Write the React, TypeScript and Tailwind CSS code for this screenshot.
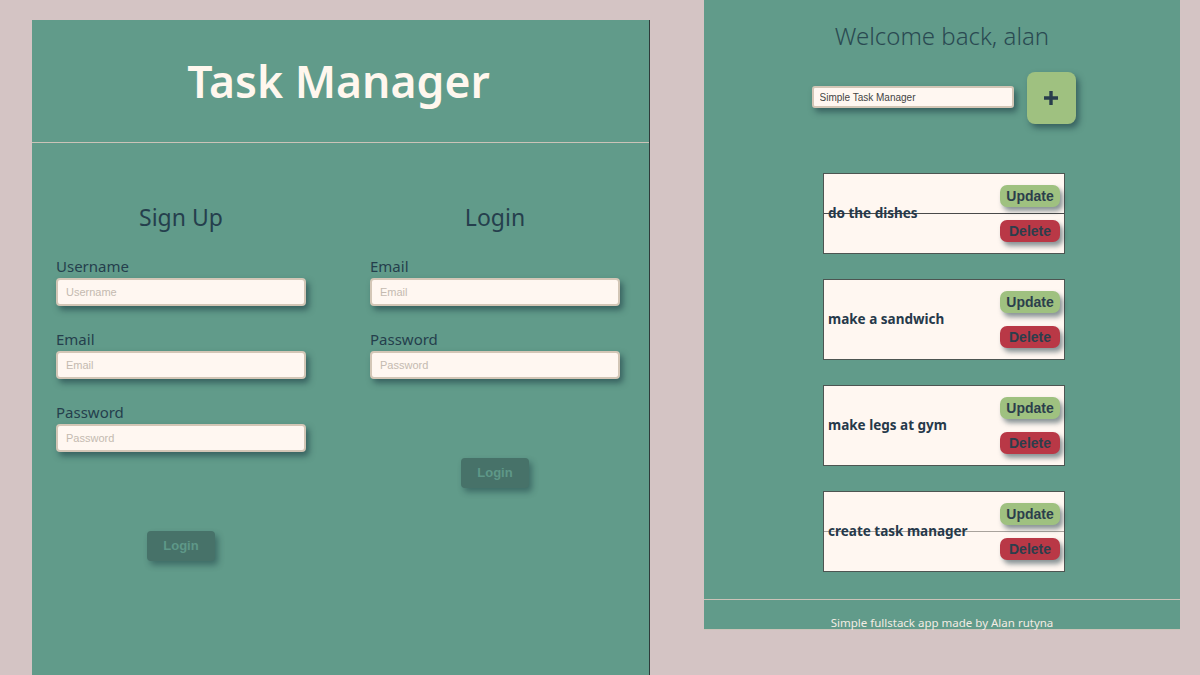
const sans = "font-['Noto_Sans','Open_Sans',sans-serif]";
const arial = "font-['Liberation_Sans',Arial,sans-serif]";

type Task = { title: string; done: boolean; lineTone?: string };

const tasks: Task[] = [
  { title: "do the dishes", done: true, lineTone: "bg-[#4a4a4a]" },
  { title: "make a sandwich", done: false },
  { title: "make legs at gym", done: false },
  { title: "create task manager", done: true, lineTone: "bg-[#a8a29c]" },
];

function Field({ label, placeholder }: { label: string; placeholder: string }) {
  return (
    <div className="flex flex-col">
      <label className={`${sans} text-[15px] leading-[20px] text-[#253f4d]`}>{label}</label>
      <input
        placeholder={placeholder}
        className={`${arial} mt-[2px] h-[28px] w-[250px] rounded-[4px] border-2 border-[#d3c6b6] bg-[#fff7f1] px-[8px] text-[11px] text-[#333] shadow-[3px_4px_6px_rgba(20,50,60,0.55)] outline-none placeholder:text-[#c4bab0]`}
      />
    </div>
  );
}

function GhostButton() {
  return (
    <button
      className={`${arial} h-[30px] w-[68px] rounded-[4px] bg-[#477269] text-[13px] font-bold text-[#5e9888] shadow-[3px_4px_6px_rgba(20,50,60,0.45)]`}
    >
      Login
    </button>
  );
}

function AuthPanel() {
  return (
    <div className="ml-[32px] mt-[20px] flex h-[655px] w-[618px] flex-col border-r border-[#2e3b3a] bg-[#619b8a]">
      <header className="flex h-[123px] items-center justify-center border-b border-[#cbc3b8] pr-[4px]">
        <h1 className={`${sans} text-[44.5px] font-semibold leading-none text-[#fff7ee]`}>Task Manager</h1>
      </header>
      <div className="flex gap-[64px] pl-[24px] pt-[58px]">
        <div className="flex w-[250px] flex-col">
          <h2 className={`${sans} text-center text-[23px] leading-[32px] text-[#253f4d]`}>Sign Up</h2>
          <div className="mt-[23px] flex flex-col gap-[23px]">
            <Field label="Username" placeholder="Username" />
            <Field label="Email" placeholder="Email" />
            <Field label="Password" placeholder="Password" />
          </div>
          <div className="mt-[79px] flex justify-center">
            <GhostButton />
          </div>
        </div>
        <div className="flex w-[250px] flex-col">
          <h2 className={`${sans} text-center text-[23px] leading-[32px] text-[#253f4d]`}>Login</h2>
          <div className="mt-[23px] flex flex-col gap-[23px]">
            <Field label="Email" placeholder="Email" />
            <Field label="Password" placeholder="Password" />
          </div>
          <div className="mt-[79px] flex justify-center">
            <GhostButton />
          </div>
        </div>
      </div>
    </div>
  );
}

function TaskCard({ task }: { task: Task }) {
  return (
    <div className="relative flex h-[81px] w-[242px] items-center justify-between border border-[#4d5552] bg-[#fff7f1] pl-[4px] pr-[4px]">
      {task.done && <div className={`absolute left-0 right-0 top-[39px] h-px ${task.lineTone}`} />}
      <span className={`${sans} relative text-[13.5px] font-bold text-[#26394a]`}>{task.title}</span>
      <div className="relative flex flex-col gap-[13px]">
        <button
          className={`${arial} h-[22px] w-[60px] rounded-[7px] bg-[#9fc180] text-[14px] font-bold text-[#2c3e4c] shadow-[3px_4px_5px_rgba(20,50,60,0.5)]`}
        >
          Update
        </button>
        <button
          className={`${arial} h-[22px] w-[60px] rounded-[7px] bg-[#b93846] text-[14px] font-bold text-[#2c3e4c] shadow-[3px_4px_5px_rgba(20,50,60,0.5)]`}
        >
          Delete
        </button>
      </div>
    </div>
  );
}

function TaskPanel() {
  return (
    <div className="ml-[54px] flex h-[630px] w-[476px] flex-col border-b border-[#cbc3b8] bg-[#619b8a]">
      <h2 className={`${sans} mt-[19px] text-center text-[24px] font-light leading-[34px] text-[#2a4a52]`}>
        Welcome back, alan
      </h2>
      <div className="mt-[19px] flex items-center justify-center gap-[13px] pl-[3px]">
        <input
          defaultValue="Simple Task Manager"
          className={`${arial} mt-[-2px] h-[22px] w-[202px] rounded-[3px] border-2 border-[#d3c6b6] bg-[#fff7f1] px-[6px] text-[10px] text-[#444] shadow-[3px_4px_6px_rgba(20,50,60,0.55)] outline-none`}
        />
        <button className="flex h-[52px] w-[49px] items-center justify-center rounded-[8px] bg-[#9fc180] shadow-[3px_4px_6px_rgba(20,50,60,0.55)]">
          <svg width="16" height="16" viewBox="0 0 16 16">
            <path d="M6.3 1h3.4v5.3H15v3.4H9.7V15H6.3V9.7H1V6.3h5.3z" fill="#283d4c" />
          </svg>
        </button>
      </div>
      <div className="mt-[49px] flex flex-col items-center gap-[25px] pl-[4px]">
        {tasks.map((t) => (
          <TaskCard key={t.title} task={t} />
        ))}
      </div>
      <footer className="mt-[27px] flex flex-1 justify-center border-t border-[#cbc3b8] pt-[15px]">
        <span className={`${sans} text-[11.5px] leading-[16px] text-[#f3ece4]`}>
          Simple fullstack app made by Alan rutyna
        </span>
      </footer>
    </div>
  );
}

export default function App() {
  return (
    <div className="flex h-[675px] w-[1200px] items-start overflow-hidden bg-[#d4c4c4]">
      <AuthPanel />
      <TaskPanel />
    </div>
  );
}
